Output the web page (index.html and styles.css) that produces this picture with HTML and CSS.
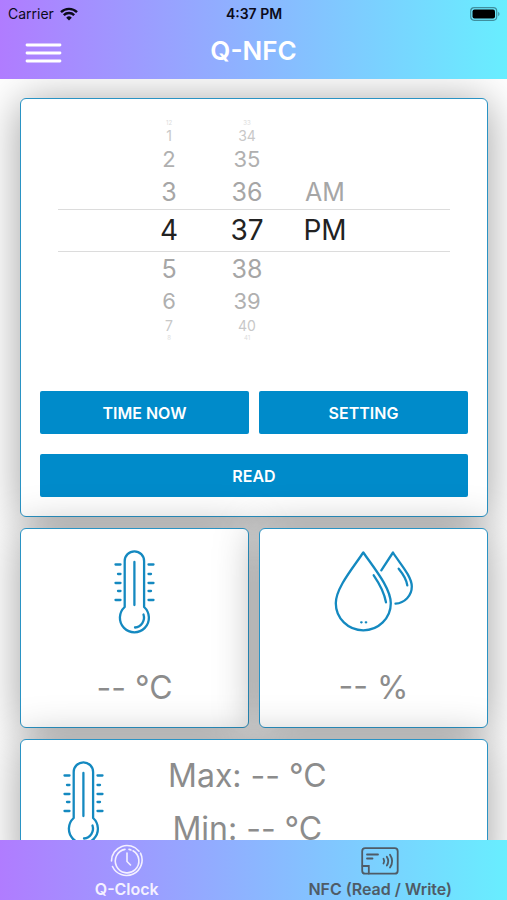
FILE: index.html
```html
<!DOCTYPE html>
<html lang="en">
<head>
  <meta charset="UTF-8" />
  <meta name="viewport" content="width=device-width, initial-scale=1" />
  <title>Q-NFC</title>
  <link rel="stylesheet" href="styles.css">
</head>
<body>
  <header class="header">
    <div class="status">
      <div class="carrier">
        <span>Carrier</span>
        <svg width="18" height="14" viewBox="0 0 18 14" fill="none" stroke="#0b0b1a" stroke-width="2.4">
          <path d="M1 5.2a11.4 11.4 0 0 1 16 0" />
          <path d="M3.8 8.2a7.4 7.4 0 0 1 10.4 0" />
          <path d="M9 13.6L6.2 10.7a4 4 0 0 1 5.6 0z" fill="#0b0b1a" stroke="none" />
        </svg>
      </div>
      <div class="time">4:37 PM</div>
      <svg class="battery" width="30" height="14" viewBox="0 0 30 14">
        <rect x="0.7" y="0.7" width="26" height="12.6" rx="3.5" fill="none" stroke="#3f8f9e" stroke-width="1.2" />
        <rect x="2.5" y="2.5" width="22.5" height="9" rx="2" fill="#000" />
        <path d="M28.2 4.8a2.5 2.5 0 0 1 0 4.4z" fill="#3f8f9e" />
      </svg>
    </div>
    <div class="navbar">
      <button class="menu" aria-label="Menu">
        <svg width="38" height="20" viewBox="0 0 38 20" stroke="#fff" stroke-width="2.8" stroke-linecap="round">
          <path d="M3 2h33M3 10h33M3 18h33" />
        </svg>
      </button>
      <h1>Q-NFC</h1>
    </div>
  </header>

  <main class="content">
    <!-- Time picker -->
    <section class="card clock">
      <div class="picker">
        <ul class="wheel">
          <li class="far3">12</li>
          <li class="far2">1</li>
          <li class="far1">2</li>
          <li class="near">3</li>
          <li class="selected">4</li>
          <li class="near">5</li>
          <li class="far1">6</li>
          <li class="far2">7</li>
          <li class="far3">8</li>
        </ul>
        <ul class="wheel">
          <li class="far3">33</li>
          <li class="far2">34</li>
          <li class="far1">35</li>
          <li class="near">36</li>
          <li class="selected">37</li>
          <li class="near">38</li>
          <li class="far1">39</li>
          <li class="far2">40</li>
          <li class="far3">41</li>
        </ul>
        <ul class="wheel">
          <li class="far3"></li>
          <li class="far2"></li>
          <li class="far1"></li>
          <li class="near">AM</li>
          <li class="selected">PM</li>
        </ul>
      </div>
      <div class="buttons">
        <button class="btn">TIME NOW</button>
        <button class="btn">SETTING</button>
        <button class="btn wide">READ</button>
      </div>
    </section>

    <!-- Temperature and humidity -->
    <div class="sensors">
      <section class="card sensor">
        <svg class="icon" width="42" height="84" viewBox="0 0 42 84">
          <use href="#thermometer" />
        </svg>
        <p class="value">-- °C</p>
      </section>
      <section class="card sensor">
        <svg class="icon" width="80" height="84" viewBox="0 0 80 84">
          <path d="M29.3 2.5C19 18 1.8 38 1.8 53.3a27.5 27 0 0 0 55 0C56.8 38 40 18 29.3 2.5z" />
          <path d="M39.7 25.3C45 33 50 41 52 52.3" />
          <path d="M47.3 20.3L59 2.5C65 12.5 77.8 26 77.8 36.5c0 9-7 16.500-16.300 17.200" />
          <path d="M64.7 18.7C69 24 72.5 29 73.3 35.3" />
          <path d="M27.2 72.3h.4M31.8 72.3h.4" />
        </svg>
        <p class="value">-- %</p>
      </section>
    </div>

    <!-- Max / min -->
    <section class="card range">
      <svg class="icon" width="42" height="84" viewBox="0 0 42 84">
        <g id="thermometer">
          <path d="M10.7 57V11a9.7 9.7 0 0 1 19.4 0v46a14.5 14.5 0 1 1-19.4 0z" />
          <path d="M20.4 12v43" />
          <path d="M29.5 64.5a10 10 0 0 1-8.5 13" />
          <path d="M1.5 14.5h5M4 24h2.5M1.5 33h5M4 41h2.5M1.5 50h5" />
          <path d="M34.5 14.5h5M34.5 24H37M34.5 33h5M34.5 41H37M34.5 50h5" />
        </g>
      </svg>
      <div class="limits">
        <p class="value">Max: -- °C</p>
        <p class="value">Min: -- °C</p>
      </div>
    </section>
  </main>

  <nav class="tabs">
    <a class="tab active" href="#">
      <svg width="34" height="34" viewBox="0 0 34 34" fill="none" stroke="currentColor" stroke-width="1.6" stroke-linecap="round">
        <path d="M1.5 17A15.5 15.5 0 0 1 29 7.2M30.5 9.2A15.5 15.5 0 1 1 2.500 22.5" />
        <path d="M15 5.4A11.8 11.8 0 1 0 23 6.8M19 5.4a11 11 0 0 1 2 .5" />
        <path d="M17 9v8.5l3.5 3.5" />
      </svg>
      <span>Q-Clock</span>
    </a>
    <a class="tab" href="#">
      <svg width="38" height="34" viewBox="0 0 38 34" fill="none" stroke="currentColor" stroke-width="1.8" stroke-linecap="round">
        <rect x="1.2" y="4.2" width="35.5" height="25.5" rx="3" />
        <path d="M6 10.5h11M6 14.5h5.5" />
        <path d="M1.5 22h6.3v7.5" />
        <path d="M22.5 14.8a4.5 4.5 0 0 1 0 4.8M25.8 12.8a8 8 0 0 1 0 8.8M29 10.8a11.5 11.5 0 0 1 0 12.8" />
      </svg>
      <span>NFC (Read / Write)</span>
    </a>
  </nav>
</body>
</html>
```

FILE: styles.css
```css
* {
  box-sizing: border-box;
}

body {
  margin: 0;
  height: 100vh;
  display: flex;
  flex-direction: column;
  font-family: Inter, "Liberation Sans", sans-serif;
  background: #fff;
}

h1, p, ul {
  margin: 0;
  padding: 0;
}

button {
  font-family: inherit;
  border: none;
  cursor: pointer;
}

/* Header */
.header {
  flex-shrink: 0;
  padding-bottom: 6px;
  background: linear-gradient(90deg, #b07cff, #68eeff);
}

.status {
  display: grid;
  grid-template-columns: 1fr auto 1fr;
  align-items: center;
  height: 27px;
  padding: 0 7px 0 8px;
  font-size: 14px;
  color: #0b0b1a;
}

.carrier {
  display: flex;
  align-items: center;
  gap: 6px;
}

.time {
  font-weight: 600;
}

.battery {
  justify-self: end;
}

.navbar {
  display: grid;
  grid-template-columns: 1fr auto 1fr;
  align-items: center;
  height: 46px;
  padding: 0 24px;
}

.menu {
  justify-self: start;
  display: flex;
  padding: 5px 0 0;
  background: none;
}

.navbar h1 {
  font-size: 26px;
  font-weight: 600;
  color: #fff;
}

/* Cards */
.content {
  flex: 1;
  min-height: 0;
  overflow-y: auto;
  scrollbar-width: none;
  display: flex;
  flex-direction: column;
  gap: 11px;
  padding: 19px 19px 19px 20px;
}

.card {
  flex-shrink: 0;
  background: #fff;
  border: 1px solid #2a93c4;
  border-radius: 6px;
  box-shadow: 0 4px 44px rgba(0, 0, 0, 0.38);
}

.clock {
  padding: 19px;
}

.picker {
  display: flex;
  justify-content: center;
  margin: 1px 18px 49px;
  padding-right: 14px;
  background: linear-gradient(#dcdcdc, #dcdcdc) 0 90px / 100% 1px no-repeat,
              linear-gradient(#dcdcdc, #dcdcdc) 0 132px / 100% 1px no-repeat;
}

.wheel {
  width: 78px;
  list-style: none;
  text-align: center;
}

.wheel li {
  overflow: hidden;
}

.wheel .selected {
  height: 43px;
  line-height: 43px;
  font-size: 28px;
  color: #222;
}

.wheel .near {
  height: 34px;
  line-height: 34px;
  font-size: 25px;
  color: #a6a6a6;
}

.wheel .far1 {
  height: 31px;
  line-height: 31px;
  font-size: 22px;
  color: #b0b0b0;
}

.wheel .far2 {
  height: 17px;
  line-height: 17px;
  font-size: 14px;
  color: #c8c8c8;
}

.wheel .far3 {
  height: 8px;
  line-height: 8px;
  font-size: 6px;
  color: #dcdcdc;
}

.buttons {
  display: grid;
  grid-template-columns: 1fr 1fr;
  gap: 20px 10px;
}

.btn {
  height: 43px;
  border-radius: 2px;
  background: #008bca;
  color: #fff;
  font-size: 16px;
  font-weight: 600;
}

.btn.wide {
  grid-column: span 2;
}

.icon {
  fill: none;
  stroke: #1489c0;
  stroke-width: 2.3;
  stroke-linecap: round;
  stroke-linejoin: round;
}

.value {
  font-size: 32px;
  line-height: 53px;
  color: #8c8c8c;
}

.sensors {
  flex-shrink: 0;
  display: grid;
  grid-template-columns: 1fr 1fr;
  gap: 10px;
}

.sensor {
  display: flex;
  flex-direction: column;
  align-items: center;
  gap: 27px;
  padding: 21px 0 13px;
}

.range {
  display: flex;
  gap: 63px;
  padding: 21px 42px;
}

.limits {
  text-align: center;
  margin-top: -12px;
}

/* Bottom tabs */
.tabs {
  flex-shrink: 0;
  display: flex;
  height: 60px;
  background: linear-gradient(90deg, #b07cff, #68eeff);
}

.tab {
  flex: 1;
  display: flex;
  flex-direction: column;
  align-items: center;
  padding-top: 4px;
  color: #4f5b66;
  font-size: 16px;
  font-weight: 600;
  line-height: 22px;
  text-decoration: none;
}

.tab.active {
  color: #f4f0ff;
}
```
